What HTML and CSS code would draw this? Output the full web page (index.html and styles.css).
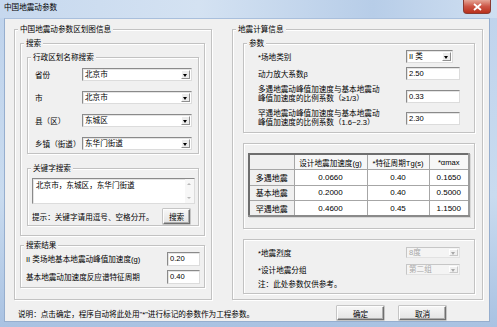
FILE: index.html
```html
<!DOCTYPE html>
<html lang="zh-CN">
<head>
    <meta charset="UTF-8">
    <title>中国地震动参数</title>
    <link rel="stylesheet" href="styles.css">
</head>
<body>
    <div class="window">
        <div class="titlebar">
            <span class="title">中国地震动参数</span>
            <span class="close">
                <svg width="9" height="8" viewBox="0 0 9 8"><path d="M1 1L8 7M8 1L1 7" stroke="#fff" stroke-width="1.8"/></svg>
            </span>
        </div>
        <div class="client">
            <div class="main">
                <div class="group g-left">
                    <span class="legend">中国地震动参数区划图信息</span>
                    <div class="group g-search">
                        <span class="legend">搜索</span>
                        <div class="group g-region">
                            <span class="legend">行政区划名称搜索</span>
                            <div class="field"><span>省份</span><div class="combo">北京市<i class="drop"></i></div></div>
                            <div class="field"><span>市</span><div class="combo">北京市<i class="drop"></i></div></div>
                            <div class="field"><span>县（区）</span><div class="combo">东城区<i class="drop"></i></div></div>
                            <div class="field"><span>乡镇（街道）</span><div class="combo">东华门街道<i class="drop"></i></div></div>
                        </div>
                        <div class="group g-key">
                            <span class="legend">关键字搜索</span>
                            <div class="memo">
                                <span class="memo-text">北京市，东城区，东华门街道</span>
                                <span class="memo-bar"><i class="up"></i><i class="down"></i></span>
                            </div>
                            <div class="hint-row">
                                <span>提示：关键字请用逗号、空格分开。</span>
                                <button class="btn btn-search">搜索</button>
                            </div>
                        </div>
                    </div>
                    <div class="group g-result">
                        <span class="legend">搜索结果</span>
                        <div class="field"><span>II 类场地基本地震动峰值加速度(g)</span><div class="edit small">0.20</div></div>
                        <div class="field"><span>基本地震动加速度反应谱特征周期</span><div class="edit small">0.40</div></div>
                    </div>
                </div>

                <div class="group g-right">
                    <span class="legend">地震计算信息</span>
                    <div class="group g-param">
                        <span class="legend">参数</span>
                        <div class="prow r1"><span>*场地类别</span><div class="combo short">II 类<i class="drop"></i></div></div>
                        <div class="prow r2"><span>动力放大系数β</span><div class="edit">2.50</div></div>
                        <div class="prow r3"><span class="two">多遇地震动峰值加速度与基本地震动<br>峰值加速度的比例系数（≥1/3）</span><div class="edit low">0.33</div></div>
                        <div class="prow r4"><span class="two">罕遇地震动峰值加速度与基本地震动<br>峰值加速度的比例系数（1.6~2.3）</span><div class="edit">2.30</div></div>
                    </div>
                    <div class="group g-table">
                        <table class="grid">
                            <tr class="head"><th class="c1"></th><th class="c2">设计地震加速度(g)</th><th class="c3">*特征周期Tg(s)</th><th class="c4">*αmax</th></tr>
                            <tr><th>多遇地震</th><td>0.0660</td><td>0.40</td><td>0.1650</td></tr>
                            <tr><th>基本地震</th><td>0.2000</td><td>0.40</td><td>0.5000</td></tr>
                            <tr><th>罕遇地震</th><td>0.4600</td><td>0.45</td><td>1.1500</td></tr>
                        </table>
                    </div>
                    <div class="group g-lower">
                        <div class="prow"><span>*地震烈度</span><div class="combo disabled">8度<i class="drop"></i></div></div>
                        <div class="prow"><span>*设计地震分组</span><div class="combo disabled">第二组<i class="drop"></i></div></div>
                        <div class="note">注：此处参数仅供参考。</div>
                    </div>
                </div>
            </div>
            <div class="footer">
                <span class="explain">说明：点击确定，程序自动将此处用"*"进行标记的参数作为工程参数。</span>
                <button class="btn btn-ok">确定</button>
                <button class="btn btn-cancel">取消</button>
            </div>
        </div>
    </div>
</body>
</html>
```

FILE: styles.css
```css
* {
    box-sizing: border-box;
}
body {
    margin: 0;
    background: #bcd2ec;
    font-family: "Liberation Sans", "Noto Sans CJK SC", sans-serif;
    font-size: 7.6px;
    color: #000;
}
.window {
    width: 497px;
    height: 327px;
    background: linear-gradient(#bfd3ec, #c9dbef 60%, #a9c2e2);
    display: flex;
    flex-direction: column;
    overflow: hidden;
}
.titlebar {
    height: 18px;
    display: flex;
    align-items: flex-start;
    padding-left: 4px;
    background: linear-gradient(90deg, #c6d8ee, #d4e2f2 40%, #b7cde8 75%, #cfdff1);
}
.title {
    line-height: 16px;
}
.close {
    margin-left: auto;
    margin-right: 6px;
    width: 28px;
    height: 14px;
    display: flex;
    align-items: center;
    justify-content: center;
    background: linear-gradient(#e5a596, #cc5545 50%, #b9301c);
    border: 1px solid #8a3b32;
    border-top: none;
    border-radius: 0 0 4px 4px;
}
.client {
    height: 304px;
    margin: 0 7px 0 4px;
    background: #f0f0f0;
    border: 1px solid #96aece;
    border-top: 1px solid #a9bfdc;
    padding: 10px 0 0 9px;
}
.main {
    display: flex;
    align-items: flex-start;
}

/* group boxes */
.group {
    position: relative;
    border: 1px solid #c2c2c2;
    box-shadow: inset 1px 1px #fff, 1px 1px #fff;
}
.legend {
    position: absolute;
    top: -5px;
    left: 3px;
    padding: 0 2px;
    line-height: 9px;
    background: #f0f0f0;
    white-space: nowrap;
}
.g-left {
    width: 198px;
    height: 271px;
    padding: 13px 6px 0 5px;
}
.g-search {
    height: 193px;
    padding: 13px 5px 0 6px;
}
.g-region {
    height: 97px;
    padding: 10px 6px 0 7px;
    display: flex;
    flex-direction: column;
    gap: 10px;
}
.field {
    display: flex;
    justify-content: space-between;
    align-items: center;
    height: 13px;
    white-space: nowrap;
}
.g-key {
    margin-top: 14px;
    height: 58px;
    padding: 9px 3px 0 4px;
}
.hint-row {
    margin-top: 5px;
    height: 15px;
    display: flex;
    align-items: center;
    justify-content: space-between;
    padding-right: 5px;
}
.g-result {
    margin-top: 9px;
    height: 43px;
    padding: 6px 4px 0 5px;
    display: flex;
    flex-direction: column;
    gap: 5px;
}

/* controls */
.combo, .edit, .memo {
    position: relative;
    height: 13px;
    background: #fff;
    border: 1px solid;
    border-color: #8a8a8a #dcdcdc #dcdcdc #8a8a8a;
    box-shadow: inset 1px 1px #e4e4e4;
    line-height: 11px;
    padding-left: 2px;
    white-space: nowrap;
}
.combo {
    width: 110px;
}
.drop {
    position: absolute;
    right: 1px;
    top: 1px;
    bottom: 1px;
    width: 9px;
    background: #ececec;
    border: 1px solid;
    border-color: #fff #8f8f8f #8f8f8f #fff;
}
.drop::after {
    content: "";
    position: absolute;
    left: 1px;
    top: 3px;
    border-left: 2.5px solid transparent;
    border-right: 2.5px solid transparent;
    border-top: 3px solid #000;
}
.combo.short {
    width: 47px;
    margin-right: 7px;
}
.combo.disabled {
    width: 54px;
    height: 11px;
    line-height: 9px;
    color: #a8a8a8;
    background: #f4f4f4;
    border-color: #c6c6c6 #e2e2e2 #e2e2e2 #c6c6c6;
    box-shadow: none;
}
.combo.disabled .drop {
    border-color: #fff #c8c8c8 #c8c8c8 #fff;
    background: #f0f0f0;
}
.combo.disabled .drop::after {
    top: 2px;
    border-top-color: #a8a8a8;
}
.edit {
    width: 54px;
}
.edit.small {
    width: 33px;
    height: 14px;
}
.memo {
    height: 26px;
    padding: 2px 0 0 3px;
    line-height: 10px;
}
.memo-bar {
    position: absolute;
    right: 0;
    top: 0;
    bottom: 0;
    width: 9px;
    background: #f7f7f7;
}
.memo-bar i {
    position: absolute;
    left: 2px;
    border-left: 2px solid transparent;
    border-right: 2px solid transparent;
}
.memo-bar .up {
    top: 4px;
    border-bottom: 2px solid #b8b8b8;
}
.memo-bar .down {
    bottom: 4px;
    border-top: 2px solid #b8b8b8;
}
.btn {
    font: inherit;
    height: 15px;
    padding: 0;
    background: linear-gradient(#f6f6f6, #e4e4e4);
    border: 1px solid;
    border-color: #fdfdfd #6f6f6f #6f6f6f #fdfdfd;
    box-shadow: inset -1px -1px #adadad, 0 0 0 0.5px #9a9a9a;
}
.btn-search {
    width: 27px;
}

/* right side */
.g-right {
    width: 251px;
    height: 271px;
    margin-left: 20px;
    padding: 13px 7px 0 10px;
}
.g-param {
    height: 90px;
    padding: 6px 14px 0 14px;
}
.prow {
    display: flex;
    justify-content: space-between;
    align-items: center;
    height: 13px;
    white-space: nowrap;
}
.r2 {
    margin-top: 4px;
}
.r3 {
    margin-top: 6px;
    height: 17px;
}
.r4 {
    margin-top: 7px;
    height: 17px;
}
.two {
    line-height: 8.5px;
}
.edit.low {
    align-self: flex-end;
}
.g-table {
    margin-top: 10px;
    height: 86px;
    padding: 9px 0 0 4px;
}
.grid {
    border-collapse: collapse;
    width: 221px;
    border: 2px solid;
    border-color: #6e6e6e #9c9c9c #8a8a8a #6e6e6e;
    box-shadow: 1px 1px 0 #d8d8d8;
    font-size: 8px;
    table-layout: fixed;
}
.grid th, .grid td {
    border: 1px solid #a6a6a6;
    height: 15.5px;
    padding: 0;
    text-align: center;
    font-weight: normal;
    white-space: nowrap;
}
.grid td {
    background: #fff;
}
.grid th {
    background: #f0f0f0;
}
.grid .head th {
    background: #f7f7f7;
    font-size: 7.6px;
}
.grid .head th.c1 {
    background: #f0f0f0;
}
.c1 {
    width: 45px;
}
.c2 {
    width: 73px;
}
.c3 {
    width: 62px;
}
.c4 {
    width: 40px;
}
.g-lower {
    margin-top: 10px;
    height: 55px;
    padding: 7px 14px 0 14px;
}
.g-lower .prow {
    height: 11px;
    margin-bottom: 6px;
}
.note {
    margin-top: -1px;
    line-height: 9px;
}

/* footer */
.footer {
    display: flex;
    align-items: center;
    height: 14px;
    margin-top: 6px;
    padding: 0 43px 0 4px;
}
.explain {
    white-space: nowrap;
}
.btn-ok {
    margin-left: auto;
    width: 47px;
    height: 14px;
}
.btn-cancel {
    margin-left: 15px;
    width: 47px;
    height: 14px;
}
```
